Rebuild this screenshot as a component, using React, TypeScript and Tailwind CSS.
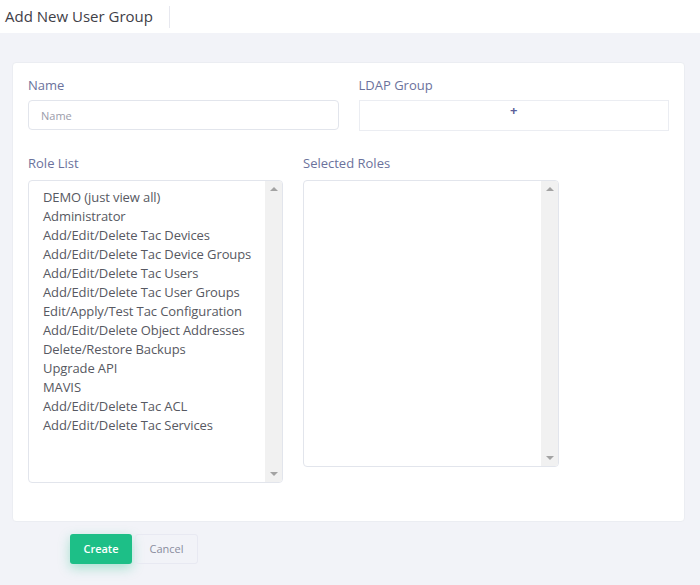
import React from "react";

const ROLES = [
  "DEMO (just view all)",
  "Administrator",
  "Add/Edit/Delete Tac Devices",
  "Add/Edit/Delete Tac Device Groups",
  "Add/Edit/Delete Tac Users",
  "Add/Edit/Delete Tac User Groups",
  "Edit/Apply/Test Tac Configuration",
  "Add/Edit/Delete Object Addresses",
  "Delete/Restore Backups",
  "Upgrade API",
  "MAVIS",
  "Add/Edit/Delete Tac ACL",
  "Add/Edit/Delete Tac Services",
];

const font = { fontFamily: '"Open Sans", "Noto Sans", sans-serif' };

const Scrollbar = () => (
  <div className="flex w-[17px] flex-col items-center justify-between bg-[#f1f1f1] py-[6px]">
    <div className="h-0 w-0 border-x-[4px] border-b-[4px] border-x-transparent border-b-[#a3a3a3]" />
    <div className="h-0 w-0 border-x-[4px] border-t-[4px] border-x-transparent border-t-[#a3a3a3]" />
  </div>
);

const ListBox = ({ items, height }: { items: string[]; height: string }) => (
  <div className={`flex w-[255px] overflow-hidden rounded-[4px] border border-[#e2e5ec] bg-white ${height}`}>
    <ul className="flex-1 pl-[14px] pt-[7px]">
      {items.map((r) => (
        <li key={r} className="h-[19px] text-[13px] leading-[19px] text-[#575962] whitespace-nowrap tracking-[-0.1px]">
          {r}
        </li>
      ))}
    </ul>
    <Scrollbar />
  </div>
);

export default function App() {
  return (
    <div className="min-h-[585px] bg-[#f2f3f8]" style={font}>
      <div className="flex h-[33px] items-center bg-white pl-[5px]">
        <h3 className="text-[15px] text-[#3f4047]">Add New User Group</h3>
        <span className="ml-[16px] h-[22px] w-px bg-[#e7e8ef]" />
      </div>

      <div className="ml-[12px] mt-[29px] w-[673px] rounded-[4px] border border-[#ebedf2] bg-white px-[15px] pb-[38px] pt-[13px]">
        <div className="grid grid-cols-2 gap-x-[20px]">
          <div>
            <label className="block text-[13px] leading-[18px] text-[#6b729c]">Name</label>
            <input
              placeholder="Name"
              className="mt-[6px] h-[30px] w-full rounded-[4px] border border-[#e2e5ec] px-[12px] text-[11px] text-[#575962] outline-none placeholder:text-[#9a9caa]"
            />
          </div>
          <div>
            <label className="block text-[13px] leading-[18px] text-[#6b729c]">LDAP Group</label>
            <div className="mt-[6px] flex h-[31px] justify-center border border-[#ebedf2] pt-[1px]">
              <span className="text-[13px] font-bold leading-[16px] text-[#5d5f9b]">+</span>
            </div>
          </div>
        </div>

        <div className="mt-[23px] flex gap-[20px]">
          <div>
            <label className="block text-[13px] leading-[18px] text-[#6b729c]">Role List</label>
            <div className="mt-[8px]">
              <ListBox items={ROLES} height="h-[303px]" />
            </div>
          </div>
          <div>
            <label className="block text-[13px] leading-[18px] text-[#6b729c]">Selected Roles</label>
            <div className="mt-[8px]">
              <ListBox items={[]} height="h-[287px] w-[256px]" />
            </div>
          </div>
        </div>
      </div>

      <div className="ml-[70px] mt-[12px] flex gap-[3px]">
        <button className="h-[30px] w-[62px] rounded-[3px] bg-[#1dbf87] text-[11px] font-semibold text-white shadow-[0_4px_12px_rgba(29,191,135,0.35)]">
          Create
        </button>
        <button className="h-[30px] w-[63px] rounded-[3px] border border-[#e8e9f2] text-[11px] text-[#8a8c9e]">
          Cancel
        </button>
      </div>
    </div>
  );
}
